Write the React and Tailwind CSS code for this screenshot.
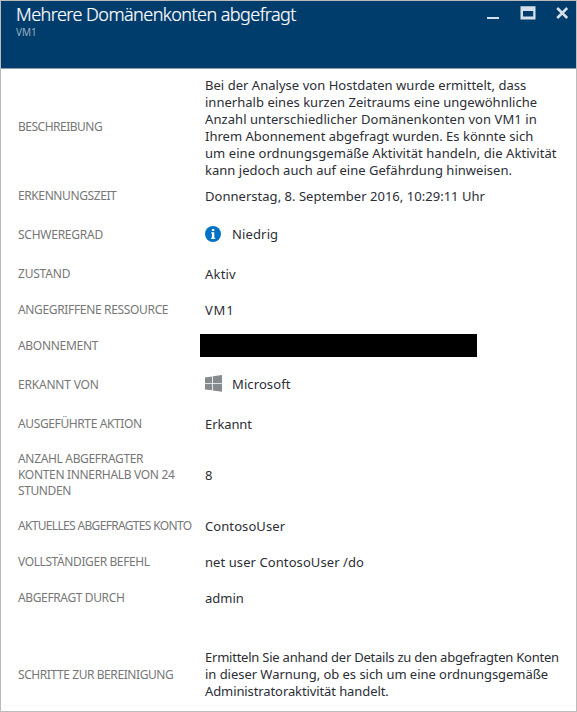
const rows = [
  {
    space: "mt-2 h-[102px]",
    labelShift: "pb-0.5",
    label: [["BESCHREIBUNG", "tracking-[-0.5px]"]],
    value: [
      ["Bei der Analyse von Hostdaten wurde ermittelt, dass", "tracking-[0.03px]"],
      ["innerhalb eines kurzen Zeitraums eine ungewöhnliche", "tracking-[0.02px]"],
      ["Anzahl unterschiedlicher Domänenkonten von VM1 in", "tracking-[0.07px]"],
      ["Ihrem Abonnement abgefragt wurden. Es könnte sich", "tracking-[0.01px]"],
      ["um eine ordnungsgemäße Aktivität handeln, die Aktivität", "tracking-[0.06px]"],
      ["kann jedoch auch auf eine Gefährdung hinweisen.", "tracking-[0.02px]"],
    ],
  },
  { space: "mt-[7px] h-5", label: [["ERKENNUNGSZEIT", "tracking-[-0.4px]"]], value: [["Donnerstag, 8. September 2016, 10:29:11 Uhr", "tracking-[0.03px]"]] },
  { space: "mt-[18px] h-5", labelShift: "pt-0.5", label: [["SCHWEREGRAD", "tracking-[-0.25px]"]], icon: "info", value: [["Niedrig", "tracking-[0.14px]"]] },
  { space: "mt-5 h-5", label: [["ZUSTAND", "tracking-[-0.2px]"]], value: [["Aktiv", "tracking-[0.2px]"]] },
  { space: "mt-4 h-5", label: [["ANGEGRIFFENE RESSOURCE", "tracking-[-0.34px]"]], value: [["VM1", "tracking-[0.8px]"]] },
  { space: "mt-4 h-5", label: [["ABONNEMENT", "tracking-[-0.3px]"]], redacted: true },
  { space: "mt-[18px] h-5", labelShift: "pt-0.5", label: [["ERKANNT VON", "tracking-[-0.2px]"]], icon: "windows", value: [["Microsoft", "tracking-[0.1px]"]] },
  { space: "mt-5 h-5", label: [["AUSGEFÜHRTE AKTION", "tracking-[-0.38px]"]], value: [["Erkannt", "tracking-[-0.1px]"]] },
  {
    space: "mt-[17px] h-12",
    label: [["ANZAHL ABGEFRAGTER", "tracking-[-0.33px]"], ["KONTEN INNERHALB VON 24", "tracking-[-0.32px]"], ["STUNDEN", "tracking-[-0.4px]"]],
    value: [["8", ""]],
  },
  { space: "mt-[17px] h-5", label: [["AKTUELLES ABGEFRAGTES KONTO", "tracking-[-0.67px]"]], value: [["ContosoUser", "tracking-[0.08px]"]] },
  { space: "mt-4 h-5", label: [["VOLLSTÄNDIGER BEFEHL", "tracking-[-0.4px]"]], value: [["net user ContosoUser /do", "tracking-[0.08px]"]] },
  { space: "mt-4 h-5", label: [["ABGEFRAGT DURCH", "tracking-[-0.37px]"]], value: [["admin", ""]] },
  {
    space: "mt-[41px] h-[51px]",
    label: [["SCHRITTE ZUR BEREINIGUNG", "tracking-[-0.42px]"]],
    value: [
      ["Ermitteln Sie anhand der Details zu den abgefragten Konten", "tracking-[-0.23px]"],
      ["in dieser Warnung, ob es sich um eine ordnungsgemäße", "tracking-[-0.04px]"],
      ["Administratoraktivität handelt.", "tracking-[-0.1px]"],
    ],
  },
];

function InfoIcon() {
  return (
    <svg className="-mt-px h-4 w-4" viewBox="0 0 16 16">
      <circle cx="8" cy="8" r="8" fill="#0072c6" />
      <path d="M6.900 3h2.400v2H6.900zM6.200 6.200h3.100v5.600h.9V13H6v-1.200h.9V7.400h-.7z" fill="#fff" />
    </svg>
  );
}

function WindowsIcon() {
  return (
    <svg className="-mt-px h-[17px] w-[17px]" viewBox="0 0 17 17">
      <path d="M0 2.400L7 1.400V8H0zM7.800 1.300L17 0V8H7.800zM0 8.800H7V15.300L0 14.400zM7.800 8.800H17V16.700L7.800 15.400z" fill="#868b8f" />
    </svg>
  );
}

function Lines({ items }) {
  return (
    <div>
      {items.map(([text, tracking]) => (
        <div key={text} className={tracking}>{text}</div>
      ))}
    </div>
  );
}

function Row({ row }) {
  return (
    <div className={`flex items-center ${row.space}`}>
      <div className={`w-[187px] shrink-0 text-[12px] leading-4 text-[#777777] ${row.labelShift ?? ""}`}>
        <Lines items={row.label} />
      </div>
      {row.redacted ? (
        <div className="-ml-[5px] mb-px h-[23px] w-[277px] bg-black" />
      ) : (
        <div className="flex items-center text-[13px] leading-[17px] text-[#2b2e35]">
          {row.icon && (
            <div className="flex w-[27px]">{row.icon === "info" ? <InfoIcon /> : <WindowsIcon />}</div>
          )}
          <Lines items={row.value} />
        </div>
      )}
    </div>
  );
}

export default function App() {
  return (
    <div className="h-[712px] w-[577px] overflow-hidden whitespace-nowrap border border-[#bcbcbc] bg-white font-['Noto_Sans',sans-serif]">
      <header className="flex h-[68px] justify-between border-b border-[#8f9da8] bg-[#003c6c]">
        <div className="pl-[15px] pt-px">
          <h1 className="text-[18px] font-light leading-6 tracking-[-0.54px] text-white [-webkit-text-stroke:0.2px_white]">Mehrere Domänenkonten abgefragt</h1>
          <p className="text-[10px] leading-3 text-[#99b1c4]">VM1</p>
        </div>
        <svg className="h-6 w-[90px]" viewBox="0 0 90 24" fill="none" stroke="#d5e0e9">
          <path d="M1 17H13" strokeWidth="2" />
          <path d="M34.500 5.200H49.500V18.400H34.500zM37 10V15.500H47.200V10z" fill="#d5e0e9" fillRule="evenodd" stroke="none" />
          <path d="M71.200 7L81.200 17M81.200 7L71.200 17" strokeWidth="2.500" />
        </svg>
      </header>
      <main className="flow-root pl-[17px]">
        {rows.map((row) => (
          <Row key={row.label[0][0]} row={row} />
        ))}
      </main>
    </div>
  );
}
